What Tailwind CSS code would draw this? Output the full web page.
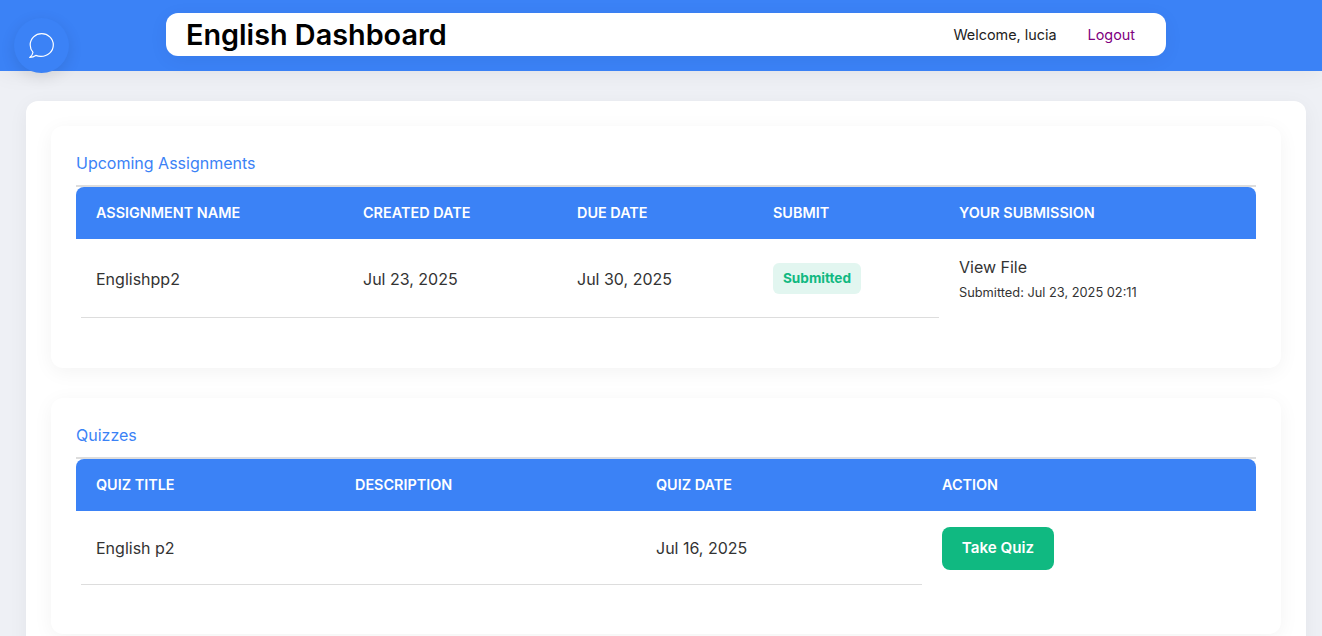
<!DOCTYPE html>
<html lang="en">
<head>
<meta charset="utf-8">
<title>English Dashboard</title>
<script src="https://cdn.jsdelivr.net/npm/@tailwindcss/browser@4"></script>
</head>
<body class="font-['Inter',sans-serif]">
<div class="relative h-[636px] overflow-hidden bg-[#eef0f5] text-[#333]">
  <header class="h-[71px] bg-[#3b82f6] pt-[13px] pl-[166px] shadow-[0_4px_20px_rgba(0,0,0,0.05)]">
    <div class="flex h-[43px] w-[1000px] items-center justify-between rounded-xl bg-white pl-5 pr-[31px] shadow-[0_4px_20px_rgba(0,0,0,0.05)]">
      <h1 class="text-[28.8px] font-semibold text-black">English Dashboard</h1>
      <div class="flex items-center gap-[31px] text-[14.4px]">
        <span class="text-[#222]">Welcome, lucia</span>
        <a href="#" class="text-[#800080]">Logout</a>
      </div>
    </div>
  </header>
  <button class="absolute left-[14px] top-[18px] flex h-[55px] w-[55px] items-center justify-center rounded-full bg-[#3b82f6] text-white shadow-[0_4px_15px_rgba(0,0,0,0.1)]">
    <svg width="25" height="25" viewBox="0 0 25 25" fill="none" stroke="currentColor" stroke-width="1.2" stroke-linejoin="round">
      <path d="M0.7 24.4 C3 24.2 5.2 23.5 6.8 22.4 C8.4 23.1 9.9 23.4 11.9 23.4 C18.7 23.4 24.3 18.6 24.3 12 C24.3 5.5 18.9 0.7 12.7 0.7 C6.4 0.7 1.2 5.5 1.2 12 C1.2 14.8 2.3 17.4 4 19.3 C3.8 21.2 2.6 23 0.7 24.4 Z"/>
    </svg>
  </button>
  <main class="ml-[26px] mt-[30px] flex w-[1280px] flex-col gap-[30px] rounded-xl bg-white p-[25px] shadow-[0_4px_20px_rgba(0,0,0,0.05)]">
    <section class="h-[242px] rounded-xl bg-white px-[25px] pt-[25px] shadow-[0_4px_20px_rgba(0,0,0,0.05)]">
      <h2 class="mb-[10px] text-base leading-[24px] text-[#3b82f6]">Upcoming Assignments</h2>
      <div class="border-t-2 border-[#ddd]">
        <div class="grid h-[52px] grid-cols-[267px_214px_196px_186px_1fr] items-center rounded-t-lg bg-[#3b82f6] text-[14.4px] font-semibold text-white">
          <div class="pl-5">ASSIGNMENT NAME</div>
          <div class="pl-5">CREATED DATE</div>
          <div class="pl-5">DUE DATE</div>
          <div class="pl-5">SUBMIT</div>
          <div class="pl-5">YOUR SUBMISSION</div>
        </div>
        <div class="grid grid-cols-[267px_214px_196px_186px_1fr] text-base">
          <div class="col-span-4 ml-[5px] grid h-[79px] grid-cols-[262px_214px_196px_181px] items-center border-b border-[#ddd]">
            <div class="pl-[15px] pt-[2px]">Englishpp2</div>
            <div class="pl-5 pt-[2px]">Jul 23, 2025</div>
            <div class="pl-5 pt-[2px]">Jul 30, 2025</div>
            <div class="pl-5">
              <span class="inline-block h-[31px] w-[88px] rounded-md bg-[#10b981]/12 text-center text-[13.6px] font-bold leading-[31px] text-[#10b981]">Submitted</span>
            </div>
          </div>
          <div class="flex h-[79px] flex-col justify-center pl-5">
            <a href="#" class="leading-[24px] text-[#333]">View File</a>
            <span class="mt-[4px] text-[12.8px] leading-[20px]">Submitted: Jul 23, 2025 02:11</span>
          </div>
        </div>
      </div>
    </section>
    <section class="h-[236px] rounded-xl bg-white px-[25px] pt-[25px] shadow-[0_4px_20px_rgba(0,0,0,0.05)]">
      <h2 class="mb-[10px] text-base leading-[24px] text-[#3b82f6]">Quizzes</h2>
      <div class="border-t-2 border-[#ddd]">
        <div class="grid h-[52px] grid-cols-[259px_301px_286px_1fr] items-center rounded-t-lg bg-[#3b82f6] text-[14.4px] font-semibold text-white">
          <div class="pl-5">QUIZ TITLE</div>
          <div class="pl-5">DESCRIPTION</div>
          <div class="pl-5">QUIZ DATE</div>
          <div class="pl-5">ACTION</div>
        </div>
        <div class="grid grid-cols-[259px_301px_286px_1fr] text-base">
          <div class="col-span-3 ml-[5px] grid h-[74px] grid-cols-[254px_301px_286px] items-center border-b border-[#ddd]">
            <div class="pl-[15px]">English p2</div>
            <div></div>
            <div class="pl-5">Jul 16, 2025</div>
          </div>
          <div class="flex h-[74px] items-start pl-5 pt-4">
            <button class="h-[43px] w-[112px] rounded-lg bg-[#10b981] text-[15.2px] font-semibold text-white">Take Quiz</button>
          </div>
        </div>
      </div>
    </section>
  </main>
</div>
</body>
</html>
